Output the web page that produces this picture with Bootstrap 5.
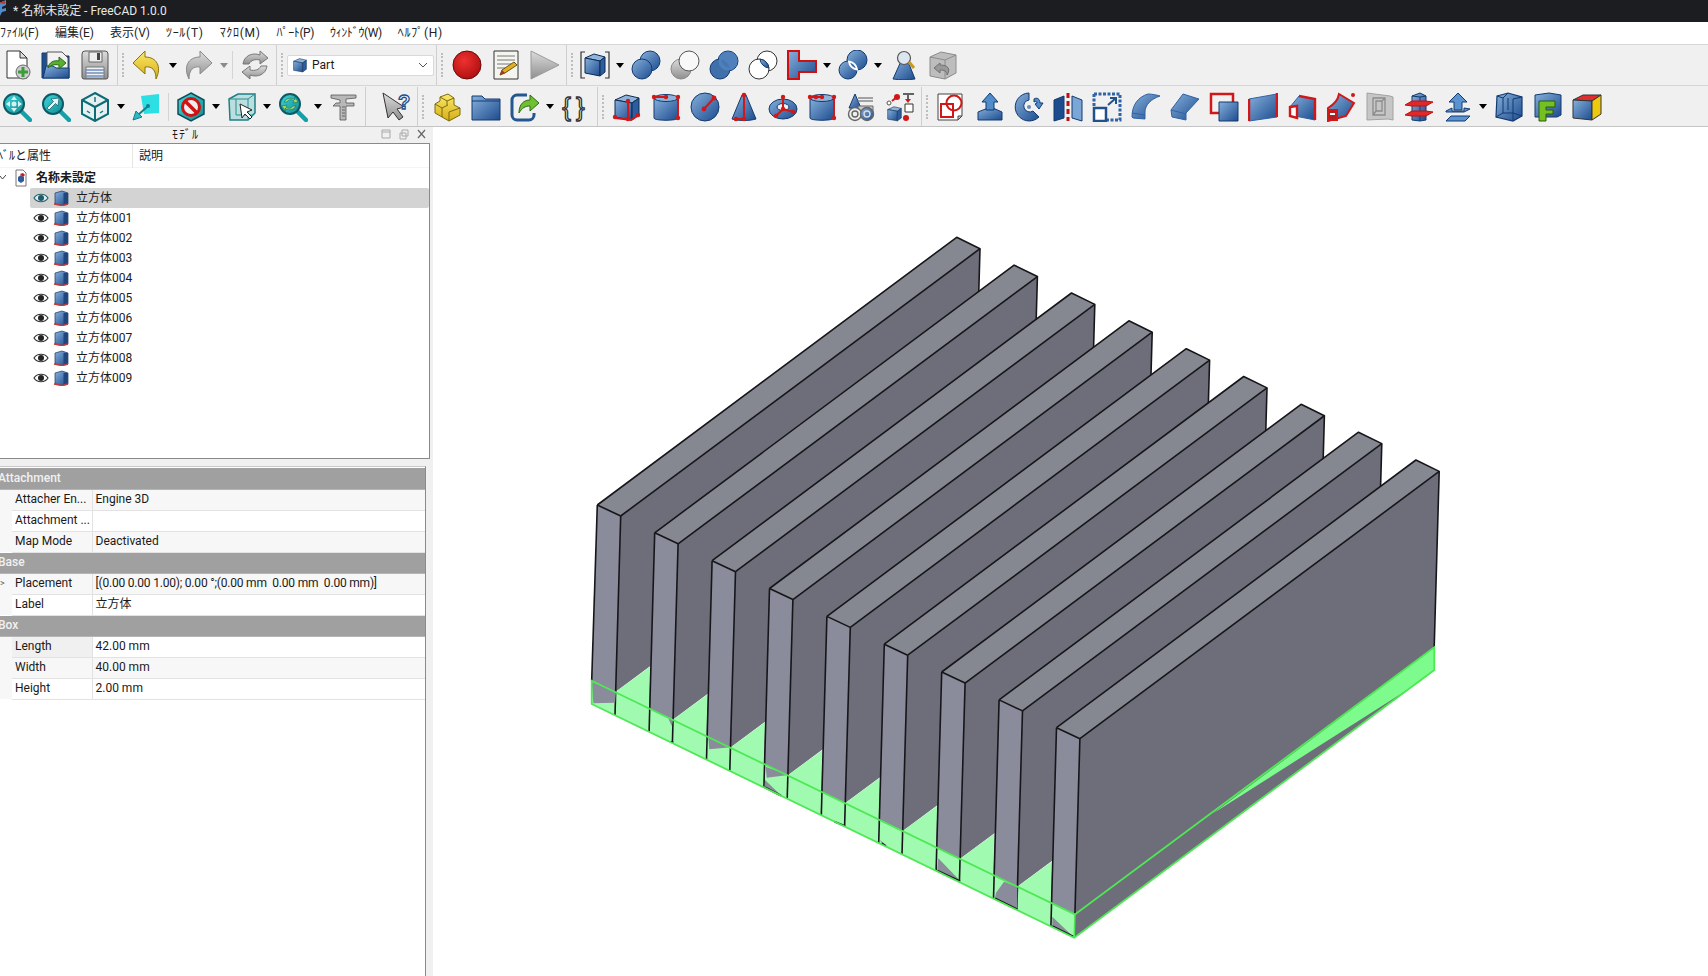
<!DOCTYPE html>
<html lang="ja">
<head>
  <meta charset="UTF-8">
  <meta name="viewport" content="width=device-width, initial-scale=1">
  <title>FreeCAD</title>
  <link href="https://cdn.jsdelivr.net/npm/bootstrap@5.3.0/dist/css/bootstrap.min.css" rel="stylesheet">
  <style>
    body {
      background: #f0f0f0;
      color: #1a1a1a;
      font-family: Roboto, "Noto Sans CJK JP", sans-serif;
      font-size: 12px;
      line-height: 1;
    }
    .fc-title {
      height: 22px;
      flex: none;
      background: #1b1d20;
      color: #e9e9e9;
      font-size: 12px;
      padding-left: 13px;
    }
    .fc-menu {
      height: 22px;
      flex: none;
      background: #fff;
      margin-left: -8px;
    }
    .fc-menu .nav-link {
      padding: 0 8px;
      color: #222;
      font-size: 12px;
    }
    .fc-menu .wide { letter-spacing: .7px; }
    .fc-menu .thin { letter-spacing: -.4px; }
    .fc-bar {
      flex: none;
      height: 41px;
      border-top: 1px solid #d6d6d6;
    }
    .fc-bar.first { margin-left: -2.5px; }
    .fc-bar.second { margin-left: -2.5px; height: 42px; padding-top: 1px; border-bottom: 1px solid #c4c4c4; }
    .tb-btn {
      width: 39px;
      flex: none;
    }
    .tb-btn svg { width: 30px; height: 30px; display: block; overflow: hidden; }
    .tb-drop { width: 12px; flex: none; }
    .tb-drop::after {
      content: "";
      border-left: 4.5px solid transparent;
      border-right: 4.5px solid transparent;
      border-top: 5px solid #000;
    }
    .tb-drop.off::after { border-top-color: #8a8a8a; }
    .tb-inner { width: 5.5px; flex: none; }
    .tb-inner::after { content: ""; width: 1px; height: 28px; background: #d4d4d4; }
    .tb-sect {
      width: 13px;
      flex: none;
      align-self: stretch;
      border-left: 1px solid #cfcfcf;
      margin-left: 2px;
      margin-right: -2px;
      padding-left: 4px;
    }
    .tb-sect.nar { width: 12px; }
    .tb-sect.nar2 { width: 11px; }
    .tb-sect i {
      display: block;
      width: 2px;
      height: 24px;
      border-left: 2px dotted #bdbdbd;
    }
    .tb-combo {
      width: 147px;
      height: 21px;
      flex: none;
      background: #fff;
      border: 1px solid #d9d9d9;
      border-radius: 2px;
      padding: 0 5px 0 4px;
      font-size: 12px;
    }
    .fc-left { width: 433px; flex: none; }
    .dock-head { height: 16px; padding-top: 2px; position: relative; }
    .dock-head span { margin-left: 172px; font-size: 12px; letter-spacing: 1px; }
    .dock-btns { position: absolute; left: 380px; top: 2px; }
    .tree-box {
      width: 430px;
      height: 316px;
      flex: none;
      background: #fff;
      border-top: 1px solid #8a8a8a;
      border-right: 1px solid #8a8a8a;
      border-bottom: 1px solid #8a8a8a;
      overflow: hidden;
    }
    .tree-head { height: 24px; border-bottom: 1px solid #f4f4f4; }
    .tree-head .col-a { width: 142px; margin-left: -9px; border-right: 1px solid #e6e6e6; height: 24px; line-height: 24px; flex: none; }
    .tree-head .col-b { padding-left: 6px; line-height: 24px; }
    .tree-root { height: 20px; font-weight: 700; position: relative; }
    .tree-root .ro-chev { position: absolute; left: 0; top: 7px; }
    .tree-root .ro-doc { position: absolute; left: 15px; top: 1px; }
    .tree-root span { margin-left: 36px; }
    .tree-item { height: 20px; margin-left: 30px; padding-left: 3px; border-radius: 2px; }
    .tree-item.sel { background: #d3d3d3; }
    .tree-item span { margin-left: 7px; }
    .tree-item svg + svg { margin-left: 4px; }
    .prop-box {
      width: 426px;
      margin-top: 7px;
      background: #fff;
      border-top: 1px solid #c9c9c9;
      border-right: 1px solid #8a8a8a;
    }
    .prop-tbl { width: 425px; table-layout: fixed; border-collapse: collapse; margin-top: 1px; }
    .prop-tbl .c-gut { width: 12px; }
    .prop-tbl .c-lbl { width: 80px; }
    .prop-tbl td { height: 21px; padding: 0 0 1px 3px; border-bottom: 1px solid #e2e2e2; white-space: pre; overflow: hidden; vertical-align: middle; }
    .prop-tbl .gut { border-bottom: 0; padding: 0; background: #f7f7f7; color: #666; font-size: 9px; }
    .prop-tbl .lbl { border-right: 1px solid #e2e2e2; }
    .prop-tbl .grp td { background: #a0a0a0; color: #f1f1f1; border-bottom: 1px solid #b5b5b5; padding-left: 0; text-indent: -2px; font-weight: 500; }
    .prop-tbl .alt td { background: #f7f7f7; }
    .prop-tbl .lbl.dk { background: #f0f0f0; }
    .prop-tbl .place { letter-spacing: -.2px; }
    .fc-view { background: #fff; }
    .fc-view svg { display: block; }
  </style>
</head>
<body class="d-flex flex-column vh-100 overflow-hidden">

  <!-- shared gradients and repeated icons -->
  <svg width="0" height="0" class="position-absolute">
    <defs>
      <linearGradient id="gb" x1="0" y1="0" x2="1" y2="1"><stop offset="0" stop-color="#86b0dc"/><stop offset="1" stop-color="#1d4c8e"/></linearGradient>
      <linearGradient id="gt" x1="0" y1="0" x2="1" y2="1"><stop offset="0" stop-color="#3fd8dc"/><stop offset="1" stop-color="#128a92"/></linearGradient>
      <linearGradient id="gy" x1="0" y1="0" x2="0" y2="1"><stop offset="0" stop-color="#fbe96a"/><stop offset="1" stop-color="#d6ae14"/></linearGradient>
      <linearGradient id="gg" x1="0" y1="0" x2="0" y2="1"><stop offset="0" stop-color="#dcdcdc"/><stop offset="1" stop-color="#8f8f8f"/></linearGradient>
      <radialGradient id="gr" cx=".4" cy=".35" r=".75"><stop offset="0" stop-color="#ef3030"/><stop offset="1" stop-color="#a80d0d"/></radialGradient>
      <symbol id="s-cube" viewBox="0 0 30 30">
        <path d="M3 8 14 3l13 3-7 5z" fill="#8fb4dc" stroke="#0d2b52"/>
        <path d="M3 8l17 3v17L3 25z" fill="url(#gb)" stroke="#0d2b52"/>
        <path d="M20 11l7-5v17l-7 5z" fill="#2d5d9f" stroke="#0d2b52"/>
      </symbol>
      <symbol id="s-eye" viewBox="0 0 16 16">
        <path d="M1 8c3-5 11-5 14 0-3 5-11 5-14 0z" fill="#fff" stroke="#333" stroke-width="1.2"/>
        <circle cx="8" cy="8" r="3" fill="#222"/>
      </symbol>
      <symbol id="s-eye2" viewBox="0 0 16 16">
        <path d="M1 8c3-5 11-5 14 0-3 5-11 5-14 0z" fill="#dfeef0" stroke="#23606c" stroke-width="1.2"/>
        <circle cx="8" cy="8" r="3" fill="#1d5a6a"/>
      </symbol>
      <symbol id="s-tcube" viewBox="0 0 16 16">
        <path d="M2 3l7-2 6 2v11l-6 1-7-1z" fill="url(#gb)" stroke="#1a3560" stroke-width=".7"/>
        <path d="M10.500 3v11.500l4.500-1V3z" fill="#1f467f"/>
        <path d="M1 14l5 1 4 .5 5-1.500" fill="none" stroke="#c43a3a" stroke-width="1.500"/>
      </symbol>
      <symbol id="s-mag" viewBox="0 0 30 30">
        <path d="M19 19l9 9" stroke="#14a0a8" stroke-width="4.500" stroke-linecap="round"/>
        <circle cx="12" cy="12" r="10" fill="url(#gt)" stroke="#0c5a66" stroke-width="2"/>
      </symbol>
      <symbol id="s-folder" viewBox="0 0 30 30">
        <path d="M1 4h10l3 3h15v21H1z" fill="url(#gb)" stroke="#123a70"/>
        <path d="M1 9h28" stroke="#123a70"/>
      </symbol>
    </defs>
  </svg>

  <!-- title bar -->
  <div class="fc-title d-flex align-items-center position-relative">
    <svg width="8" height="18" viewBox="0 0 8 18" class="position-absolute start-0 top-0"><path d="M-4 4 6 0v5L2 7v2l4-1v3l-4 1-2 4z" fill="#4f8ccc"/><path d="M-2 3 5 1v3z" fill="#c0392b"/></svg>
    * 名称未設定 - FreeCAD 1.0.0
  </div>

  <!-- menu -->
  <ul class="nav fc-menu align-items-center flex-nowrap">
    <li class="nav-item"><a class="nav-link" href="#">ﾌｧｲﾙ(F)</a></li>
    <li class="nav-item"><a class="nav-link" href="#">編集(E)</a></li>
    <li class="nav-item"><a class="nav-link" href="#">表示(V)</a></li>
    <li class="nav-item"><a class="nav-link wide" href="#">ﾂｰﾙ(T)</a></li>
    <li class="nav-item"><a class="nav-link wide" href="#">ﾏｸﾛ(M)</a></li>
    <li class="nav-item"><a class="nav-link thin" href="#">ﾊﾟｰﾄ(P)</a></li>
    <li class="nav-item"><a class="nav-link thin" href="#">ｳｨﾝﾄﾞｳ(W)</a></li>
    <li class="nav-item"><a class="nav-link wide" href="#">ﾍﾙﾌﾟ(H)</a></li>
  </ul>

  <!-- toolbar row 1 -->
  <div class="fc-bar first d-flex align-items-center flex-nowrap" id="bar1">
    <div class="tb-btn d-flex justify-content-center"><svg viewBox="0 0 30 30"><path d="M5 1h13l7 7v20H5z" fill="#fff" stroke="#333"/><path d="M18 1v7h7z" fill="#ddd" stroke="#333"/><circle cx="21" cy="22" r="7" fill="#cfcfcf" stroke="#666"/><path d="M21 17v10M16 22h10" stroke="#3c9c3c" stroke-width="3"/></svg></div>
    <div class="tb-btn d-flex justify-content-center"><svg viewBox="0 0 30 30"><path d="M1 3h10l2 3h15v22H1z" fill="#1f4f8f" stroke="#123a70"/><path d="M6 2h15l6 6v15H6z" fill="#f2f2f2" stroke="#555"/><path d="M2 28l3-12h7l3 2 13 0v10z" fill="url(#gb)" stroke="#123a70"/><path d="M7 18c1-6 6-8 11-7V7l7 6-7 6v-4c-4-1-8 0-11 3z" fill="#58b030" stroke="#2d6a16"/></svg></div>
    <div class="tb-btn d-flex justify-content-center"><svg viewBox="0 0 30 30"><path d="M2 4a3 3 0 0 1 3-3h20a3 3 0 0 1 3 3v23a2 2 0 0 1-2 2H4a2 2 0 0 1-2-2z" fill="url(#gg)" stroke="#555"/><path d="M9 2h13v10H9z" fill="#eee" stroke="#666"/><path d="M17 3h3v7h-3z" fill="#444"/><path d="M6 17h18v11H6z" fill="#f2f2f2" stroke="#777"/><path d="M6 20h18M6 23h18M6 26h18" stroke="#6f8fc0" stroke-width="1.500"/></svg></div>
    <div class="tb-sect d-flex align-items-center"><i></i></div>
    <div class="tb-btn d-flex justify-content-center"><svg viewBox="0 0 30 30"><path d="M13 1 1 13l12 11v-7c7-1 11 3 11 12 6-12 1-22-11-22z" fill="url(#gy)" stroke="#8a7412"/></svg></div>
    <div class="tb-drop d-flex justify-content-center"></div>
    <div class="tb-btn d-flex justify-content-center"><svg viewBox="0 0 30 30"><path d="M17 1l12 12-12 11v-7C10 16 6 20 6 29 0 17 5 7 17 7z" fill="url(#gg)" stroke="#8a8a8a"/></svg></div>
    <div class="tb-drop off d-flex justify-content-center"></div>
    <div class="tb-inner d-flex justify-content-center align-items-center"></div>
    <div class="tb-btn d-flex justify-content-center"><svg viewBox="0 0 30 30"><path d="M3 14C4 6 12 2 20 5V1l8 7-8 6v-4c-5-1-9 0-11 4z" fill="url(#gg)" stroke="#777"/><path d="M27 16c-1 8-9 12-17 9v4l-8-7 8-6v4c5 1 9 0 11-4z" fill="url(#gg)" stroke="#777"/></svg></div>
    <div class="tb-sect d-flex align-items-center"><i></i></div>
    <div class="tb-combo d-flex align-items-center">
      <svg width="16" height="16"><use href="#s-cube" width="16" height="16"/></svg>
      <span class="ms-1 flex-grow-1">Part</span>
      <svg width="10" height="6" viewBox="0 0 10 6"><path d="M1 1l4 4 4-4" fill="none" stroke="#555"/></svg>
    </div>
    <div class="tb-sect d-flex align-items-center"><i></i></div>
    <div class="tb-btn d-flex justify-content-center"><svg viewBox="0 0 30 30"><circle cx="15" cy="15" r="14" fill="url(#gr)" stroke="#6a0808"/></svg></div>
    <div class="tb-btn d-flex justify-content-center"><svg viewBox="0 0 30 30"><path d="M3 1h24v28H3z" fill="#f5f5f0" stroke="#333"/><path d="M6 6h18M6 10h18M6 14h14M6 18h8" stroke="#777"/><path d="M9 25l2-5L23 12l3 3-12 8z" fill="#e0b020" stroke="#6b5210"/><path d="M9 25l2-5 3 3z" fill="#a33"/></svg></div>
    <div class="tb-btn d-flex justify-content-center"><svg viewBox="0 0 30 30"><path d="M1 1l28 14L1 29z" fill="url(#gg)" stroke="#9a9a9a"/></svg></div>
    <div class="tb-sect nar2 d-flex align-items-center"><i></i></div>
    <div class="tb-btn d-flex justify-content-center"><svg viewBox="0 0 30 30"><path d="M5 2H1v26h4M25 2h4v26h-4" fill="none" stroke="#333" stroke-width="1.200"/><path d="M5 8l9-4 11 3-5 4z" fill="#8fb4dc" stroke="#0d2b52"/><path d="M5 8l15 3v15L5 23z" fill="url(#gb)" stroke="#0d2b52"/><path d="M20 11l5-4v15l-5 4z" fill="#2d5d9f" stroke="#0d2b52"/></svg></div>
    <div class="tb-drop d-flex justify-content-center"></div>
    <div class="tb-btn d-flex justify-content-center"><svg viewBox="0 0 30 30"><circle cx="19" cy="11" r="10" fill="url(#gb)" stroke="#123a70"/><circle cx="11" cy="19" r="10" fill="url(#gb)" stroke="#123a70"/></svg></div>
    <div class="tb-btn d-flex justify-content-center"><svg viewBox="0 0 30 30"><circle cx="11" cy="19" r="10" fill="url(#gg)" stroke="#888"/><circle cx="19" cy="11" r="10" fill="#f8f8f8" stroke="#555"/></svg></div>
    <div class="tb-btn d-flex justify-content-center"><svg viewBox="0 0 30 30"><circle cx="19" cy="11" r="10" fill="#4f80bb" stroke="#123a70"/><circle cx="11" cy="19" r="10" fill="#3f70ac" stroke="#123a70"/><circle cx="19" cy="11" r="9.500" fill="#4f80bb"/><path d="M12 9.500a10 10 0 0 1 8.500 8.500 10 10 0 0 1-8.500-8.500z" fill="#4576b2"/></svg></div>
    <div class="tb-btn d-flex justify-content-center"><svg viewBox="0 0 30 30"><circle cx="19" cy="11" r="10" fill="#fff" stroke="#333"/><circle cx="11" cy="19" r="10" fill="#fff" stroke="#333"/><path d="M12 9.100a10 10 0 0 1 8.900 8.900 10 10 0 0 1-8.900-8.900z" fill="url(#gb)" stroke="#123a70"/></svg></div>
    <div class="tb-btn d-flex justify-content-center"><svg viewBox="0 0 30 30"><path d="M1 1h11v10h17v11H12v7H1z" fill="url(#gb)" stroke="#d01010" stroke-width="2"/></svg></div>
    <div class="tb-drop d-flex justify-content-center"></div>
    <div class="tb-btn d-flex justify-content-center"><svg viewBox="0 0 30 30"><circle cx="19" cy="10" r="10" fill="url(#gb)" stroke="#123a70"/><circle cx="10" cy="20" r="9" fill="url(#gb)" stroke="#123a70"/><path d="M11 11.500a9 9 0 0 1 8 8 9 9 0 0 1-8-8z" fill="#3a6ba8" stroke="#fff" stroke-width="2"/></svg></div>
    <div class="tb-drop d-flex justify-content-center"></div>
    <div class="tb-btn d-flex justify-content-center"><svg viewBox="0 0 30 30"><path d="M4 29 13 9h5l8 20c-7 1-15 1-22 0z" fill="url(#gb)" stroke="#123a70"/><circle cx="15" cy="8" r="6.500" fill="#dbe6ef" stroke="#555" stroke-width="1.200"/><path d="M20 12l5 6" stroke="#c99a20" stroke-width="3"/></svg></div>
    <div class="tb-btn d-flex justify-content-center"><svg viewBox="0 0 30 30"><path d="M2 7l11-5 15 3v18l-11 6-15-3z" fill="#bdbdbd" stroke="#8c8c8c"/><path d="M2 7l15 3 11-5M17 10v19" fill="none" stroke="#8c8c8c"/><path d="M12 13l-6 5 6 5v-3c4 0 7 1 7 5 4-6 1-10-7-10z" fill="#999" stroke="#707070"/></svg></div>
  </div>

  <!-- toolbar row 2 -->
  <div class="fc-bar second d-flex align-items-center flex-nowrap" id="bar2">
    <div class="tb-btn d-flex justify-content-center"><svg viewBox="0 0 30 30"><use href="#s-mag"/><path d="M12 4l3 4H9zM12 20l3-4H9zM4 12l4-3v6zM20 12l-4-3v6z" fill="#d6f0f2"/><circle cx="12" cy="12" r="2.500" fill="#d6f0f2"/></svg></div>
    <div class="tb-btn d-flex justify-content-center"><svg viewBox="0 0 30 30"><use href="#s-mag"/><path d="M18 6l-8 1 2.500 2.500L6 16l2 2 6.500-6.500L17 14z" fill="#e6f6f6" stroke="#0c5a66" stroke-width=".7"/></svg></div>
    <div class="tb-btn d-flex justify-content-center"><svg viewBox="0 0 30 30"><path d="M15 1l13 7v14l-13 7-13-7V8z" fill="#e6f0f0" stroke="#0c6b74" stroke-width="2"/><path d="M2 8l13 7 13-7M15 15v14" fill="none" stroke="#0c6b74" stroke-width="2"/><path d="M15 5v5M7 19l3 2M23 19l-3 2" stroke="#167a82" stroke-width="1.500"/></svg></div>
    <div class="tb-drop d-flex justify-content-center"></div>
    <div class="tb-btn d-flex justify-content-center"><svg viewBox="0 0 30 30"><path d="M10 4l18-2v19l-15 1z" fill="#2bdfe4"/><path d="M16 15L7 23" stroke="#14808a" stroke-width="2"/><path d="M2 28l3-9 6 6z" fill="#2bb9c4" stroke="#14808a"/><circle cx="17" cy="14" r="2" fill="#14808a"/></svg></div>
    <div class="tb-inner d-flex justify-content-center align-items-center"></div>
    <div class="tb-btn d-flex justify-content-center"><svg viewBox="0 0 30 30"><path d="M15 1l13 7v14l-13 7-13-7V8z" fill="url(#gt)" stroke="#0c4f5a" stroke-width="1.500"/><circle cx="15" cy="15" r="8.500" fill="#e8f0f0" stroke="#d01212" stroke-width="3"/><path d="M9 9l12 12" stroke="#d01212" stroke-width="3.500"/></svg></div>
    <div class="tb-drop d-flex justify-content-center"></div>
    <div class="tb-btn d-flex justify-content-center"><svg viewBox="0 0 30 30"><path d="M2 7l9-5h17v19l-7 7H3z" fill="#8fd0d0" fill-opacity=".55" stroke="#1f7f85" stroke-width="1.500"/><path d="M2 7h19l7-5M21 7v21M9 7v16h17" fill="none" stroke="#2a8f92"/><path d="M13 12l2 14 3-4 5 5 2-2-5-5 5-2z" fill="#fff" stroke="#222"/></svg></div>
    <div class="tb-drop d-flex justify-content-center"></div>
    <div class="tb-btn d-flex justify-content-center"><svg viewBox="0 0 30 30"><use href="#s-mag"/><path d="M6 10c2-4 8-5 11-2V5l3 5-5 1 1-2c-2-2-5-2-7 1zM18 14c-2 4-8 5-11 2v3l-3-5 5-1-1 2c2 2 5 2 7-1z" fill="#9fe05a" stroke="#0c5a66" stroke-width=".5"/></svg></div>
    <div class="tb-drop d-flex justify-content-center"></div>
    <div class="tb-btn d-flex justify-content-center"><svg viewBox="0 0 30 30"><path d="M2 3h25v3l-10 1v4h8v3h-8v14h-6V14H4l3-3h4V8L2 6z" fill="#b8b8b8" stroke="#555" stroke-width=".8"/><path d="M13 15h3M13 18h3M13 21h3M13 24h3" stroke="#666"/></svg></div>
    <div class="tb-sect d-flex align-items-center"></div>
    <div class="tb-btn d-flex justify-content-center"><svg viewBox="0 0 30 30"><path d="M2 1l5 25 5-6 6 8 4-3-6-8 7-2z" fill="url(#gg)" stroke="#333"/><text x="17" y="17" font-family="Liberation Sans, sans-serif" font-size="20" font-weight="700" fill="#fff" stroke="#1f4f8f" stroke-width="1.300">?</text></svg></div>
    <div class="tb-sect nar d-flex align-items-center"><i></i></div>
    <div class="tb-btn d-flex justify-content-center"><svg viewBox="0 0 30 30"><path d="M3 21V12l5-3V5l8-3 6 4v7l6 3v7l-11 6z" fill="url(#gy)" stroke="#7a6a10"/><path d="M3 12l7 4 6-3M8 5l7 4 7-3M15 9v4M10 16v9M17 29v-9l11-4" fill="none" stroke="#7a6a10"/></svg></div>
    <div class="tb-btn d-flex justify-content-center"><svg viewBox="0 0 30 30"><use href="#s-folder"/></svg></div>
    <div class="tb-btn d-flex justify-content-center"><svg viewBox="0 0 30 30"><path d="M17 3H7a5 5 0 0 0-5 5v15a5 5 0 0 0 5 5h12a5 5 0 0 0 5-5v-2" fill="none" stroke="#24568f" stroke-width="3"/><path d="M9 21c0-9 5-13 11-13V3l9 8-9 8v-5c-5 0-8 2-11 7z" fill="#6fc030" stroke="#2d6a16"/></svg></div>
    <div class="tb-drop d-flex justify-content-center"></div>
    <div class="tb-btn d-flex justify-content-center"><svg viewBox="0 0 30 30"><text x="15" y="24" text-anchor="middle" letter-spacing="5" font-family="Liberation Sans, sans-serif" font-size="26" fill="#fff" stroke="#333" stroke-width="1.300">{}</text></svg></div>
    <div class="tb-sect nar d-flex align-items-center"><i></i></div>
    <div class="tb-btn d-flex justify-content-center"><svg viewBox="0 0 30 30"><use href="#s-cube"/><path d="M3 26l16 2 8-5M16 26V9" fill="none" stroke="#d01818" stroke-width="2"/><circle cx="3" cy="25" r="2.200" fill="#d01818"/><circle cx="16" cy="27" r="2.200" fill="#d01818"/><circle cx="26" cy="23" r="2.200" fill="#d01818"/><circle cx="16" cy="9" r="2.200" fill="#d01818"/></svg></div>
    <div class="tb-btn d-flex justify-content-center"><svg viewBox="0 0 30 30"><path d="M3 6v20c0 3 24 3 24 0V6z" fill="url(#gb)" stroke="#123a70"/><ellipse cx="15" cy="6" rx="12" ry="3.500" fill="#8fb4dc" stroke="#123a70"/><path d="M27 5v21M3 5h14" stroke="#d01818" stroke-width="2"/><circle cx="27" cy="5" r="2.200" fill="#d01818"/><circle cx="3" cy="5" r="2.200" fill="#d01818"/><circle cx="15" cy="5" r="2.200" fill="#d01818"/><circle cx="27" cy="26" r="2.200" fill="#d01818"/></svg></div>
    <div class="tb-btn d-flex justify-content-center"><svg viewBox="0 0 30 30"><circle cx="15" cy="15" r="14" fill="url(#gb)" stroke="#123a70"/><path d="M14 17l10-11" stroke="#d01818" stroke-width="2"/><circle cx="14" cy="17" r="2.400" fill="#d01818"/><circle cx="24" cy="6" r="2.400" fill="#d01818"/></svg></div>
    <div class="tb-btn d-flex justify-content-center"><svg viewBox="0 0 30 30"><path d="M3 27 13 3h4l10 24c-7 2-17 2-24 0z" fill="url(#gb)" stroke="#123a70"/><path d="M15 3v24M7 27h8" stroke="#d01818" stroke-width="2"/><circle cx="15" cy="3" r="2.300" fill="#d01818"/><circle cx="7" cy="27" r="2.300" fill="#d01818"/><circle cx="15" cy="27" r="2.300" fill="#d01818"/></svg></div>
    <div class="tb-btn d-flex justify-content-center"><svg viewBox="0 0 30 30"><ellipse cx="15" cy="17" rx="14" ry="10" fill="url(#gb)" stroke="#123a70"/><ellipse cx="15" cy="15" rx="6" ry="3.500" fill="#f0f0f0" stroke="#123a70"/><path d="M15 5v12l-7 7M15 17l10 3" fill="none" stroke="#d01818" stroke-width="2"/><circle cx="15" cy="5" r="2.200" fill="#d01818"/><circle cx="15" cy="17" r="2.200" fill="#d01818"/><circle cx="8" cy="24" r="2.200" fill="#d01818"/><circle cx="25" cy="20" r="2.200" fill="#d01818"/></svg></div>
    <div class="tb-btn d-flex justify-content-center"><svg viewBox="0 0 30 30"><path d="M3 6v20c0 3 24 3 24 0V6z" fill="url(#gb)" stroke="#123a70"/><ellipse cx="15" cy="6" rx="12" ry="3.500" fill="#8fb4dc" stroke="#123a70"/><path d="M27 5v21M3 5h14" stroke="#d01818" stroke-width="2"/><circle cx="3" cy="5" r="2.200" fill="#d01818"/><circle cx="9" cy="5" r="2.200" fill="#d01818"/><circle cx="15" cy="5" r="2.200" fill="#d01818"/><circle cx="27" cy="5" r="2.200" fill="#d01818"/><circle cx="27" cy="26" r="2.200" fill="#d01818"/></svg></div>
    <div class="tb-btn d-flex justify-content-center"><svg viewBox="0 0 30 30"><path d="M3 16 9 2l6 14z" fill="url(#gb)" stroke="#123a70"/><path d="M12 6h15M12 9h15" stroke="#888" stroke-width="1.500"/><path d="M12 14h15v8H12z" fill="#c9c9c9" stroke="#666"/><circle cx="9" cy="22" r="6.500" fill="#eee" stroke="#666" stroke-width="1.400"/><circle cx="9" cy="22" r="3" fill="none" stroke="#666" stroke-width="1.400"/><circle cx="21" cy="22" r="6.500" fill="url(#gb)" stroke="#666" stroke-width="1.400"/><circle cx="21" cy="22" r="3" fill="none" stroke="#ddd" stroke-width="1.400"/></svg></div>
    <div class="tb-btn d-flex justify-content-center"><svg viewBox="0 0 30 30"><use href="#s-cube" x="1" y="13" width="17" height="17"/><path d="M18 2h11M23 3v6" stroke="#333" stroke-width="1.500"/><path d="M20 7h6l-3 4z" fill="#d01818"/><path d="M20 12h8v8h-8z" fill="#fff" stroke="#333"/><circle cx="12" cy="5" r="3" fill="#d01818"/><path d="M12 5l-5 4" stroke="#d01818" stroke-width="2"/><circle cx="4" cy="11" r="2" fill="#fff" stroke="#555"/><circle cx="21" cy="26" r="3" fill="#d01818"/></svg></div>
    <div class="tb-sect nar d-flex align-items-center"><i></i></div>
    <div class="tb-btn d-flex justify-content-center"><svg viewBox="0 0 30 30"><path d="M2 2h24v22l-4 4H2z" fill="#fff" stroke="#444"/><path d="M26 24h-4v4z" fill="#ccc" stroke="#444"/><circle cx="18" cy="11" r="7.500" fill="none" stroke="#d01818" stroke-width="2"/><path d="M5 12h12v13H5z" fill="none" stroke="#d01818" stroke-width="2"/></svg></div>
    <div class="tb-btn d-flex justify-content-center"><svg viewBox="0 0 30 30"><path d="M3 20l10-4h5l9 4v8H3z" fill="url(#gb)" stroke="#123a70"/><path d="M15 1l8 9h-4v8h-8v-8H7z" fill="#4f8ccc" stroke="#123a70"/></svg></div>
    <div class="tb-btn d-flex justify-content-center"><svg viewBox="0 0 30 30"><path d="M15 1a14 14 0 1 0 10 24l-6-6a6 6 0 1 1-4-11z" fill="url(#gb)" stroke="#123a70"/><circle cx="15" cy="15" r="2" fill="#6a8db8"/><path d="M20 7c3-2 6 0 6 4l3 0-4 6-4-5 2-1c0-2-1-2-3-1z" fill="#4f8ccc" stroke="#123a70"/></svg></div>
    <div class="tb-btn d-flex justify-content-center"><svg viewBox="0 0 30 30"><path d="M1 8l10-4v22L1 29z" fill="#1d4c8e" stroke="#123a70"/><path d="M29 8 19 4v22l10 3z" fill="#7aa7d6" stroke="#123a70"/><path d="M15 1v28" stroke="#c01010" stroke-width="3" stroke-dasharray="5 3"/></svg></div>
    <div class="tb-btn d-flex justify-content-center"><svg viewBox="0 0 30 30"><path d="M2 2h26v26H13" fill="none" stroke="#2f62a6" stroke-width="3" stroke-dasharray="3 1.500"/><path d="M2 2v12" stroke="#2f62a6" stroke-width="3" stroke-dasharray="3 1.500"/><path d="M2 16h12v13H2z" fill="#fff" stroke="#24508a" stroke-width="2.500"/><path d="M16 13l8-7m-6 0h6v6" fill="none" stroke="#24508a" stroke-width="2"/></svg></div>
    <div class="tb-btn d-flex justify-content-center"><svg viewBox="0 0 30 30"><path d="M1 25c0-12 6-20 16-23 4 0 9 1 12 2-9 3-15 9-15 16v7l-12-1z" fill="url(#gb)" stroke="#2f62a6"/><path d="M1 21l13 2" stroke="#2f62a6"/></svg></div>
    <div class="tb-btn d-flex justify-content-center"><svg viewBox="0 0 30 30"><path d="M1 18 13 2l16 5-13 14v7L2 25z" fill="url(#gb)" stroke="#2f62a6"/><path d="M1 18l15 4" stroke="#2f62a6"/></svg></div>
    <div class="tb-btn d-flex justify-content-center"><svg viewBox="0 0 30 30"><path d="M2 2h22v19H2z" fill="#f0f0f0" stroke="#d01818" stroke-width="2.500"/><path d="M10 10h19v19H10z" fill="url(#gb)" stroke="#123a70"/></svg></div>
    <div class="tb-btn d-flex justify-content-center"><svg viewBox="0 0 30 30"><path d="M1 7l28-5v23L1 29z" fill="url(#gb)" stroke="#2f62a6"/><path d="M1 7v22M29 1v24" stroke="#d01818" stroke-width="2.500"/></svg></div>
    <div class="tb-btn d-flex justify-content-center"><svg viewBox="0 0 30 30"><path d="M3 15 12 4l16 3v21L8 24z" fill="url(#gb)" stroke="#2f62a6"/><path d="M12 4l16 3v21" fill="none" stroke="#d01818" stroke-width="2.400"/><path d="M3 15l7-1v12l-7-2z" fill="#fff" stroke="#d01818" stroke-width="2.400"/></svg></div>
    <div class="tb-btn d-flex justify-content-center"><svg viewBox="0 0 30 30"><path d="M2 16C9 12 12 8 13 2l15 9-8 13-18 5z" fill="url(#gb)" stroke="#d01818" stroke-width="2"/><path d="M2 18h9v10H2z" fill="#b02020" stroke="#d01818" stroke-width="2"/><path d="M4 22h5" stroke="#fff" stroke-width="2"/><circle cx="27" cy="3" r="2" fill="#d01818"/></svg></div>
    <div class="tb-btn d-flex justify-content-center"><svg viewBox="0 0 30 30"><path d="M2 1l23 3 3 1v23l-5-1-21 1z" fill="#c6c6c6" stroke="#a2a2a2"/><path d="M8 6h12v17H8zM11 9h6v10h-6zM8 23l3-4M20 6l-3 3" fill="none" stroke="#8c8c8c" stroke-width="1.300"/></svg></div>
    <div class="tb-btn d-flex justify-content-center"><svg viewBox="0 0 30 30"><path d="M8 4l8-3 6 3v24l-6 1-8-1z" fill="url(#gb)" stroke="#123a70"/><path d="M16 5v24M8 4l8 1 6-1" fill="none" stroke="#123a70"/><path d="M1 13l7-4h14l7 1-7 4H8zM1 23l7-4h14l7 1-7 4H8z" fill="#e02828" stroke="#c01010"/></svg></div>
    <div class="tb-btn d-flex justify-content-center"><svg viewBox="0 0 30 30"><path d="M15 1l9 9h-5v8h-8v-8H6z" fill="#5a93cf" stroke="#123a70"/><path d="M3 19l6-3v3h12v-3l6 1-6 3H3zM3 29l5-5h19l-5 5z" fill="#5a93cf" stroke="#123a70"/></svg></div>
    <div class="tb-drop d-flex justify-content-center"></div>
    <div class="tb-btn d-flex justify-content-center"><svg viewBox="0 0 30 30"><path d="M3 4l11-3 14 4v19l-9 5-17-4z" fill="url(#gb)" stroke="#123a70" stroke-width="1.200"/><path d="M3 4l6 2v15l-7 4M9 6l5-5M9 21h10l9 3M19 7v22M19 7l9-2M14 6v12" fill="none" stroke="#123a70"/></svg></div>
    <div class="tb-btn d-flex justify-content-center"><svg viewBox="0 0 30 30"><path d="M2 3l14-2 12 2v20l-4 2H2z" fill="url(#gb)" stroke="#123a70"/><path d="M6 9l16 0v6h-9v3h7v4h-7v7H6z" fill="#74c020" stroke="#2d5a0c"/></svg></div>
    <div class="tb-btn d-flex justify-content-center"><svg viewBox="0 0 30 30"><path d="M1 8l10-5h18l-9 6z" fill="#e02d2d" stroke="#333"/><path d="M1 8l19 1v19L1 26z" fill="url(#gb)" stroke="#333"/><path d="M20 9l9-6v19l-9 6z" fill="#edc90f" stroke="#333"/></svg></div>
  </div>

  <!-- main area -->
  <div class="d-flex flex-grow-1 overflow-hidden">
    <div class="fc-left d-flex flex-column">
      <div class="dock-head">
        <span>ﾓﾃﾞﾙ</span>
        <div class="dock-btns d-flex">
          <svg width="14" height="11" viewBox="0 0 14 11"><path d="M2 1h8v8H2zM2 3h8" fill="none" stroke="#aaa"/></svg>
          <svg class="ms-1" width="14" height="11" viewBox="0 0 14 11"><path d="M4 1h6v6H4zM2 4h6v6H2z" fill="#f0f0f0" stroke="#aaa"/></svg>
          <svg class="ms-1" width="12" height="11" viewBox="0 0 12 11"><path d="M2 1l7 8M9 1l-7 8" stroke="#666" stroke-width="1.200"/></svg>
        </div>
      </div>
      <div class="tree-box">
        <div class="tree-head d-flex">
          <div class="col-a">ﾗﾍﾞﾙと属性</div>
          <div class="col-b">説明</div>
        </div>
        <div class="tree-root d-flex align-items-center">
          <svg class="ro-chev" width="6" height="6" viewBox="0 0 6 6"><path d="M0 1l2.500 3L6 0" fill="none" stroke="#444"/></svg>
          <svg class="ro-doc" width="12" height="18" viewBox="0 0 12 18"><path d="M1 1h7l3 3v13H1z" fill="#fff" stroke="#777"/><path d="M3 8l3-2 3 2v4l-3 2-3-2z" fill="#2c5c9c"/><path d="M5 5l3-1 2 2-2 2z" fill="#c02020"/></svg>
          <span>名称未設定</span>
        </div>
        <div id="treeRows"></div>
      </div>
      <div class="prop-box flex-grow-1">
        <table class="prop-tbl">
          <colgroup><col class="c-gut"><col class="c-lbl"><col></colgroup>
          <tr class="grp"><td colspan="3">Attachment</td></tr>
          <tr class="alt"><td class="gut"></td><td class="lbl">Attacher En...</td><td>Engine 3D</td></tr>
          <tr><td class="gut"></td><td class="lbl">Attachment ...</td><td></td></tr>
          <tr class="alt"><td class="gut"></td><td class="lbl">Map Mode</td><td>Deactivated</td></tr>
          <tr class="grp"><td colspan="3">Base</td></tr>
          <tr class="alt"><td class="gut">&gt;</td><td class="lbl">Placement</td><td class="place">[(0.00 0.00 1.00); 0.00 °;(0.00 mm  0.00 mm  0.00 mm)]</td></tr>
          <tr><td class="gut"></td><td class="lbl">Label</td><td>立方体</td></tr>
          <tr class="grp"><td colspan="3">Box</td></tr>
          <tr><td class="gut"></td><td class="lbl dk">Length</td><td>42.00 mm</td></tr>
          <tr class="alt"><td class="gut"></td><td class="lbl">Width</td><td>40.00 mm</td></tr>
          <tr><td class="gut"></td><td class="lbl">Height</td><td>2.00 mm</td></tr>
        </table>
      </div>
    </div>
    <div class="fc-view flex-grow-1">
      <svg id="view" width="1275" height="849" viewBox="433 127 1275 849"></svg>
    </div>
  </div>

  <script src="https://cdn.jsdelivr.net/npm/bootstrap@5.3.0/dist/js/bootstrap.bundle.min.js"></script>
  <script>
    // tree rows
    const names = ["立方体"];
    for (let i = 1; i <= 9; i++) names.push("立方体00" + i);
    document.getElementById("treeRows").innerHTML = names.map((n, i) => `
      <div class="tree-item d-flex align-items-center ${i === 0 ? "sel" : ""}">
        <svg width="16" height="16"><use href="#s-eye${i === 0 ? "2" : ""}" width="16" height="16"/></svg>
        <svg width="16" height="16"><use href="#s-tcube" width="16" height="16"/></svg>
        <span>${n}</span>
      </div>`).join("");

    // heat sink: 9 fins on a base plate
    const DX = 57.4, DY = 27.84;
    const FRONT = "#8a8b9b", SIDE = "#6e6e7a", TOP = "#858791", LINE = "#16161a";
    const GREEN = "#a0fbb1", GLINE = "#4fe855";
    const fin = k => {
      const s = ([x, y]) => [x + DX * k, y + DY * k];
      return {
        A: s([597.3, 505]), B: s([620.7, 516]), C: s([956.7, 237.3]), D: s([980, 248.7]),
        Au: s([591.7, 680.7]), Bu: s([615.7, 691.7]), Ab: s([591.7, 704]), Bb: s([615, 715]),
        Du: s([975, 424.6])
      };
    };
    const pts = a => a.map(p => p[0].toFixed(1) + "," + p[1].toFixed(1)).join(" ");
    const poly = (a, fill, extra = "") => `<polygon points="${pts(a)}" fill="${fill}" ${extra}/>`;
    const line = (p, q, col, w = 1.6) => `<line x1="${p[0]}" y1="${p[1]}" x2="${q[0]}" y2="${q[1]}" stroke="${col}" stroke-width="${w}"/>`;
    const z7 = ([x, y]) => [580 + x / 3, 650 + y / 3];
    const z8 = ([x, y]) => [1040 + x / 3, 620 + y / 3];

    let out = "";
    const f0 = fin(0), f8 = fin(8);
    // base front strip and right side
    out += poly([f0.Au, f8.Bu, f8.Bb, f0.Ab], GREEN);
    out += poly([f8.Bu, [1434.3, 647.3], [1434.3, 670], f8.Bb], SIDE);
    out += poly([[1183, 82], [1183, 150], [1140, 185], [520, 580]].map(z8), "#7dfb8d");

    for (let k = 0; k < 9; k++) {
      const f = fin(k);
      out += poly([f.B, f.D, f.Du, f.Bu], SIDE);
      if (k < 8) {
        const n = fin(k + 1);
        out += poly([f.Bu, [n.Au[0] + 1, f.Bu[1] - 25], [n.Au[0] + 1, n.Au[1]]], GREEN);
      }
      out += poly([f.A, f.C, f.D, f.B], TOP);
      out += poly([f.A, f.B, f.Bu, f.Au], FRONT);
      out += `<polyline points="${pts([f.A, f.C, f.D, f.Du])}" fill="none" stroke="${LINE}" stroke-width="1.600" stroke-linejoin="round"/>`;
      out += line(f.A, f.B, LINE) + line(f.B, f.D, LINE);
      out += line(f.A, k === 0 ? f.Au : f.Ab, LINE) + line(f.B, k === 8 ? f.Bu : f.Bb, LINE);
    }

    // grey bits of the fins showing through the selected base
    const patches = [
      [[35, 95], [108, 125], [105, 158], [40, 160]],
      [[265, 205], [280, 208], [275, 228]],
      [[385, 262], [452, 292], [388, 298]],
      [[557, 350], [625, 375], [560, 383]],
      [[555, 390], [602, 435], [555, 412]],
      [[900, 570], [918, 585], [905, 580]],
      [[1075, 625], [1138, 690], [1072, 660]],
      [[1272, 695], [1312, 710], [1312, 778], [1245, 745], [1248, 728]],
      [[1417, 800], [1480, 860], [1417, 828]]
    ];
    patches.forEach(p => out += poly(p.map(z7), FRONT));
    const ticks = [
      [[272, 275], [280, 278]], [[555, 412], [603, 437]], [[763, 515], [795, 528]],
      [[905, 580], [918, 588]], [[1072, 662], [1140, 693]], [[1245, 745], [1312, 778]], [[1417, 828], [1480, 860]]
    ];
    ticks.forEach(t => out += line(z7(t[0]), z7(t[1]), LINE, 1.8));

    // selection outline of the base
    out += `<polygon points="${pts([f0.Au, f8.Bu, [1434.3, 647.3], [1434.3, 670], f8.Bb, f0.Ab])}" fill="none" stroke="${GLINE}" stroke-width="1.800"/>`;
    out += line(f8.Bu, f8.Bb, GLINE, 1.5);
    document.getElementById("view").innerHTML = out;
  </script>
</body>
</html>
